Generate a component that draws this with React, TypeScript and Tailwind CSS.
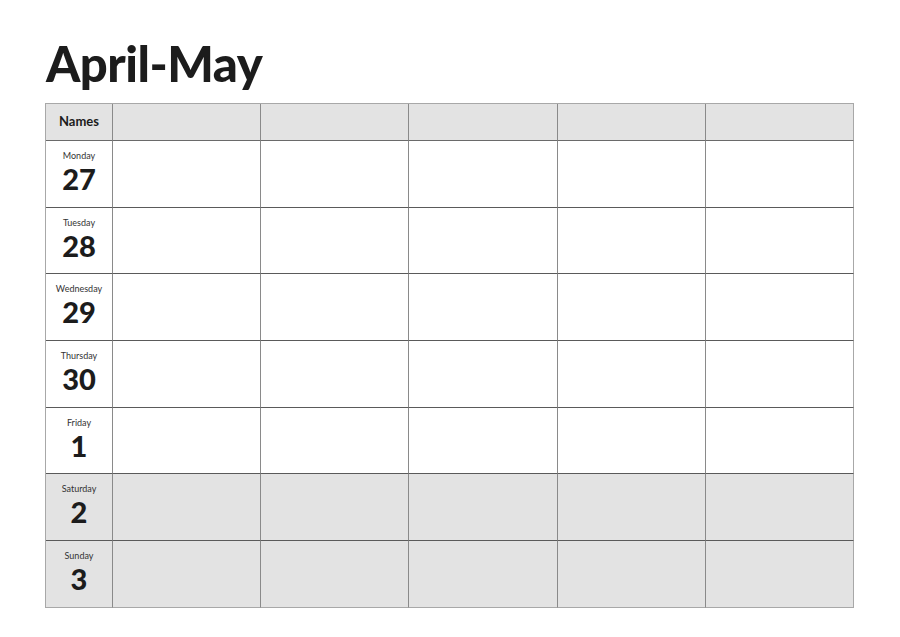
const days = [
  { name: 'Monday', num: '27', weekend: false },
  { name: 'Tuesday', num: '28', weekend: false },
  { name: 'Wednesday', num: '29', weekend: false },
  { name: 'Thursday', num: '30', weekend: false },
  { name: 'Friday', num: '1', weekend: false },
  { name: 'Saturday', num: '2', weekend: true },
  { name: 'Sunday', num: '3', weekend: true },
];

const cols = [0, 1, 2, 3, 4];

export default function App() {
  return (
    <div className="w-[900px] h-[637px] bg-white font-['Lato','Liberation_Sans',sans-serif] text-[#1c1c1c]">
      <div className="pl-[46px] pt-[33px]">
        <h1 className="text-[49px] font-black leading-[60px] tracking-[-0.5px]">April-May</h1>
      </div>
      <div className="ml-[45px] mt-[10px] w-[809px] border-t border-l border-[#a8a8a8] grid grid-cols-[67px_repeat(5,1fr)] grid-rows-[37px_repeat(7,66.7px)]">
        <div className="bg-[#e3e3e3] border-r border-b border-r-[#8a8a8a] border-b-[#6a6a6a] flex items-center justify-center text-[13px] font-bold">
          Names
        </div>
        {cols.map((c) => (
          <div
            key={c}
            className={`bg-[#e3e3e3] border-b border-b-[#6a6a6a] border-r ${c === 4 ? 'border-r-[#a8a8a8]' : 'border-r-[#8a8a8a]'}`}
          />
        ))}
        {days.map((d, i) => {
          const last = i === days.length - 1;
          const bg = d.weekend ? 'bg-[#e3e3e3]' : 'bg-white';
          const bb = last ? 'border-b-[#a8a8a8]' : 'border-b-[#5a5a5a]';
          return (
            <div key={d.name} className="contents">
              <div className={`${bg} border-r border-b border-r-[#8a8a8a] ${bb} flex flex-col items-center pt-[9px]`}>
                <div className="text-[9px] leading-[normal] text-[#333]">{d.name}</div>
                <div className="text-[29px] font-black leading-[normal]">{d.num}</div>
              </div>
              {cols.map((c) => (
                <div
                  key={c}
                  className={`${bg} border-b ${bb} border-r ${c === 4 ? 'border-r-[#a8a8a8]' : 'border-r-[#8a8a8a]'}`}
                />
              ))}
            </div>
          );
        })}
      </div>
    </div>
  );
}
